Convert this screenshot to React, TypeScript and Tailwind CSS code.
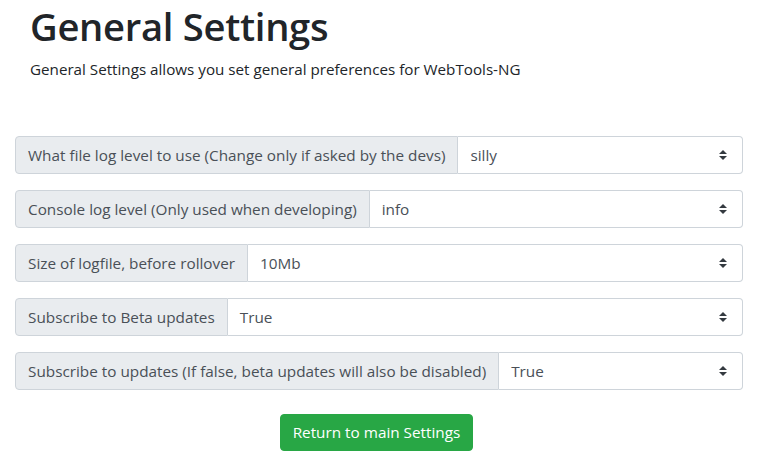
import React from 'react';

const rows = [
  { label: 'What file log level to use (Change only if asked by the devs)', value: 'silly' },
  { label: 'Console log level (Only used when developing)', value: 'info' },
  { label: 'Size of logfile, before rollover', value: '10Mb' },
  { label: 'Subscribe to Beta updates', value: 'True' },
  { label: 'Subscribe to updates (If false, beta updates will also be disabled)', value: 'True' },
];

function SelectArrows() {
  return (
    <svg width="8" height="10" viewBox="0 0 4 5" className="shrink-0">
      <path fill="#343a40" d="M2 0L0 2h4zm0 5L0 3h4z" />
    </svg>
  );
}

export default function App() {
  return (
    <div className="min-h-[473px] bg-white text-[#212529] font-['Open_Sans',sans-serif]">
      <div className="pl-[30px] pt-[2px]">
        <h1 className="text-[38.2px] leading-[48px] font-semibold tracking-[-0.3px]">General Settings</h1>
        <p className="mt-[7px] text-[15.2px] leading-6">
          General Settings allows you set general preferences for WebTools-NG
        </p>
      </div>

      <div className="px-[15px] mt-[55px] flex flex-col gap-4">
        {rows.map((row) => (
          <div key={row.label} className="flex h-[38px] w-full">
            <div className="flex items-center px-3 bg-[#e9ecef] border border-[#ced4da] rounded-l text-[15.3px] text-[#495057] whitespace-nowrap">
              {row.label}
            </div>
            <div className="flex flex-1 items-center justify-between pl-3 pr-[15px] bg-white border border-l-0 border-[#ced4da] rounded-r text-[15.3px] text-[#495057]">
              <span>{row.value}</span>
              <SelectArrows />
            </div>
          </div>
        ))}
      </div>

      <div className="flex justify-center mt-6 pr-[5px]">
        <button className="h-[37px] px-3 rounded bg-[#28a745] border border-[#28a745] text-white text-[15.3px]">
          Return to main Settings
        </button>
      </div>
    </div>
  );
}
